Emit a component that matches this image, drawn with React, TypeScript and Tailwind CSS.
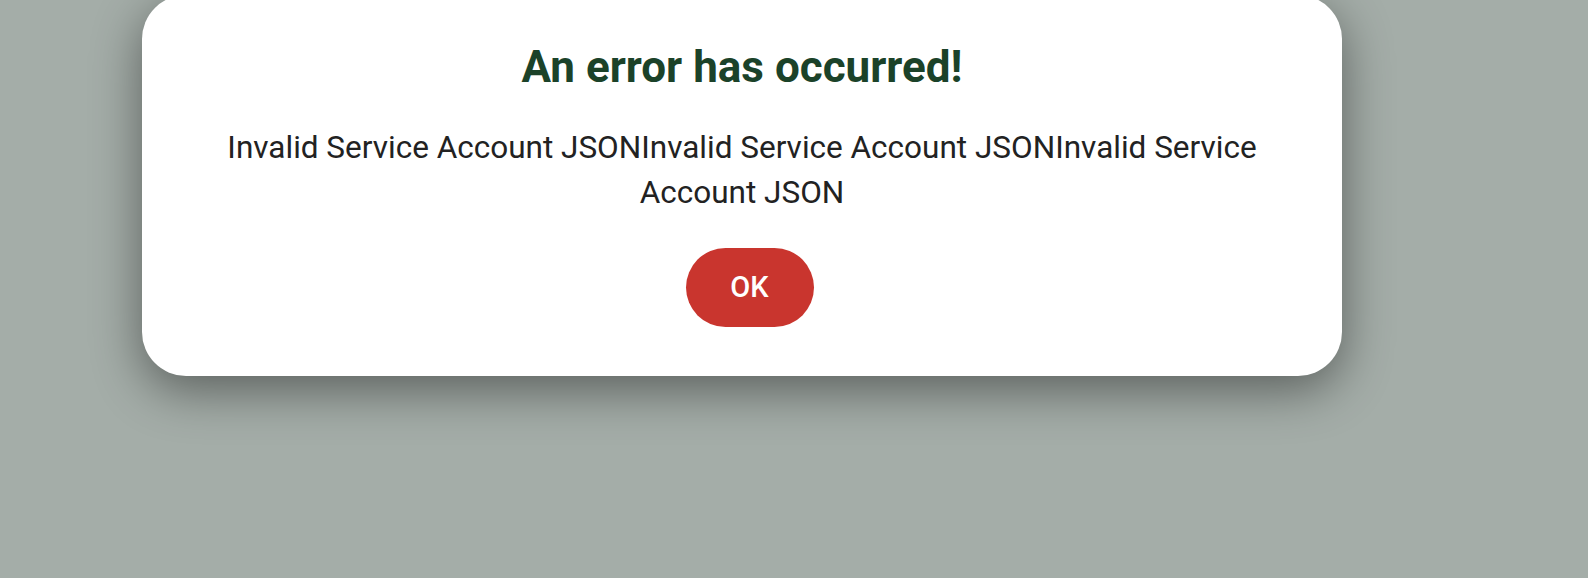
export default function App() {
  return (
    <div
      className="h-[578px] w-full overflow-hidden bg-[#a4ada8] pl-[142px]"
      style={{ fontFamily: "Roboto, 'Noto Sans', sans-serif" }}
    >
      {/* Error dialog */}
      <div className="-mt-[5px] flex w-[1200px] flex-col items-center rounded-[44px] bg-white px-[48px] pt-[46px] pb-[49px] text-center shadow-[0_14px_50px_rgba(0,0,0,0.45)]">
        <h1 className="text-[44px] leading-[52px] font-bold text-[#1b4229]">
          An error has occurred!
        </h1>
        <p className="mt-[32px] text-[31.5px] leading-[45px] text-[#222222]">
          Invalid Service Account JSONInvalid Service Account JSONInvalid Service Account JSON
        </p>
        <button className="mt-[33px] ml-[15px] h-[79px] w-[128px] rounded-full bg-[#c9352e] text-[29px] font-medium text-white">
          OK
        </button>
      </div>
    </div>
  );
}
